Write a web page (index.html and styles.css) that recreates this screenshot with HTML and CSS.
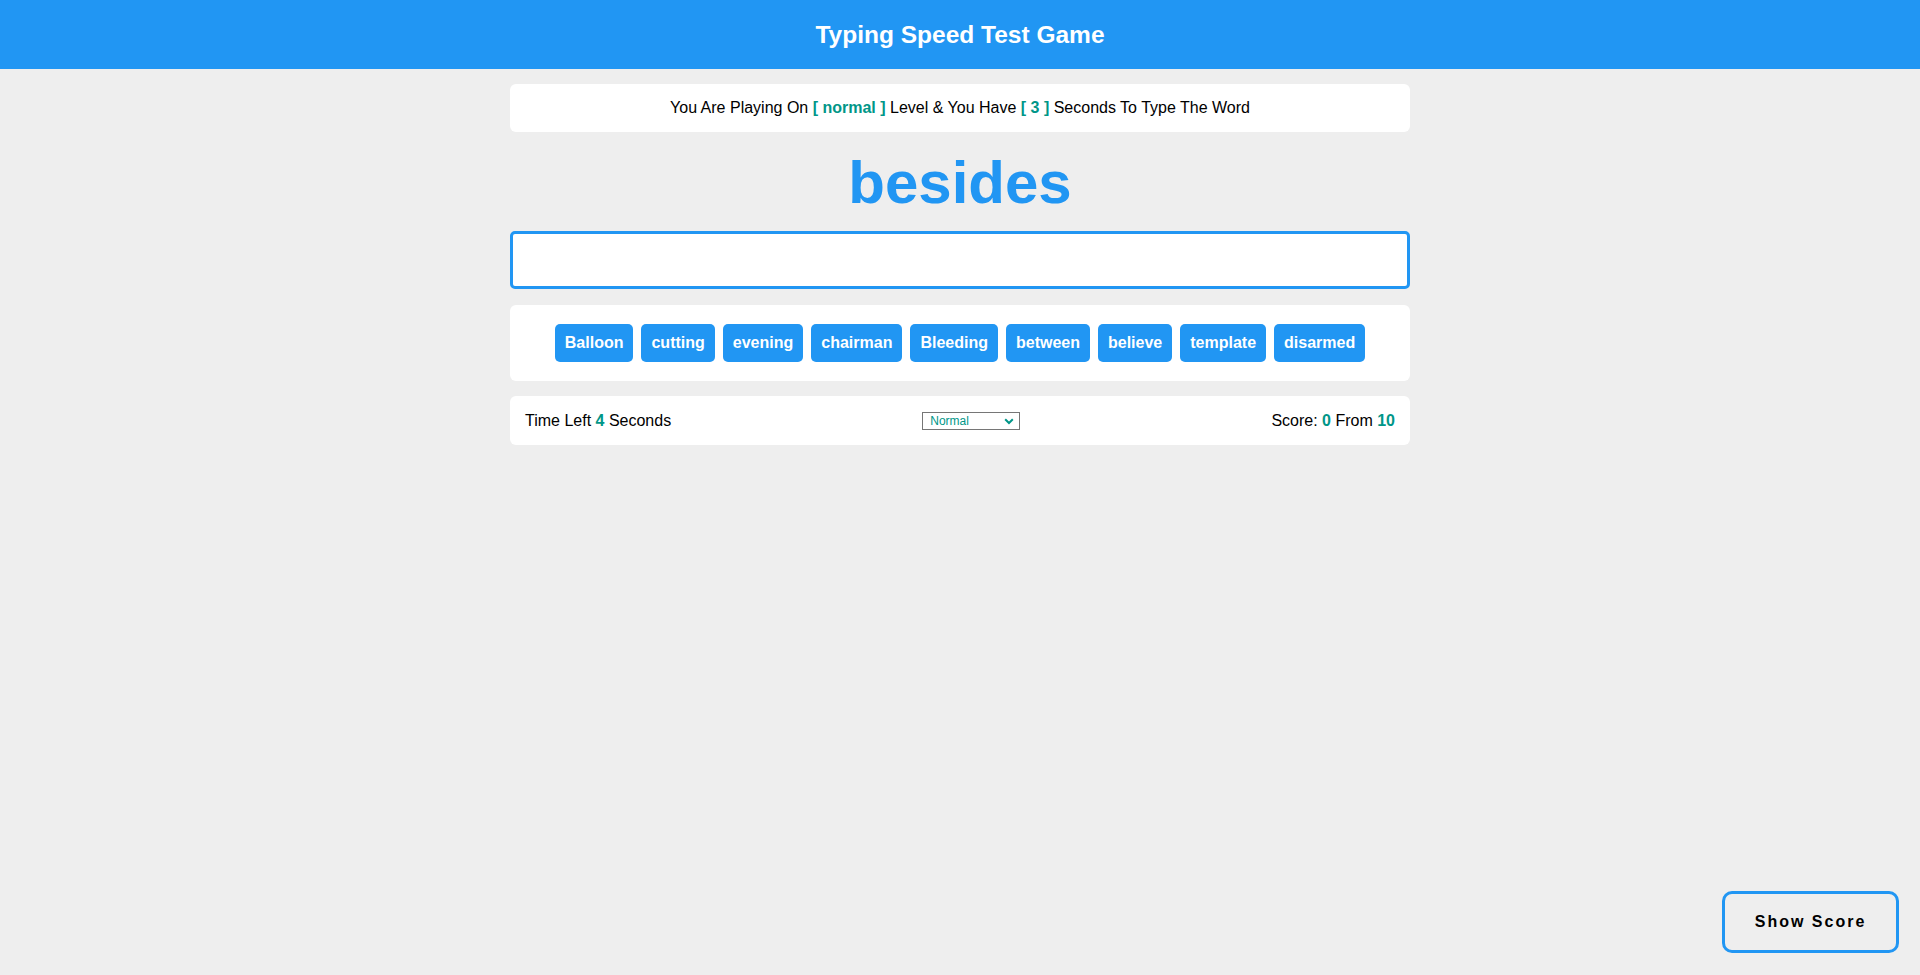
FILE: index.html
```html
<!DOCTYPE html>
<html lang="en">
<head>
<meta charset="UTF-8">
<title>Typing Speed Test Game</title>
<link rel="stylesheet" href="styles.css">
</head>
<body>
<header class="site-header">
  <h1 class="site-title">Typing Speed Test Game</h1>
</header>
<main class="game">
  <div class="message">You Are Playing On <span class="accent">[ normal ]</span> Level &amp; You Have <span class="accent">[ 3 ]</span> Seconds To Type The Word</div>
  <div class="the-word">besides</div>
  <input class="input" type="text" aria-label="Type the word">
  <div class="upcoming-words">
    <span class="word-chip">Balloon</span>
    <span class="word-chip">cutting</span>
    <span class="word-chip">evening</span>
    <span class="word-chip">chairman</span>
    <span class="word-chip">Bleeding</span>
    <span class="word-chip">between</span>
    <span class="word-chip">believe</span>
    <span class="word-chip">template</span>
    <span class="word-chip">disarmed</span>
  </div>
  <div class="control">
    <div class="time">Time Left <span class="accent">4</span> Seconds</div>
    <div class="select-wrap">
      <select class="level-select" aria-label="Level">
        <option>Easy</option>
        <option selected>Normal</option>
        <option>Hard</option>
      </select>
      <svg class="select-arrow" width="10" height="7" viewBox="0 0 10 7"><path d="M1.2 1.3 L5 5 L8.8 1.3" fill="none" stroke="#009688" stroke-width="2"/></svg>
    </div>
    <div class="score">Score: <span class="accent">0</span> From <span class="accent">10</span></div>
  </div>
</main>
<button class="show-score" type="button">Show Score</button>
</body>
</html>
```

FILE: styles.css
```css
* { box-sizing: border-box; }

body {
  margin: 0;
  background: #eeeeee;
  font-family: "Liberation Sans", Arial, sans-serif;
  font-size: 16px;
  color: #000;
}

.site-header {
  background: #2196f3;
  padding: 20px;
  text-align: center;
}

.site-title {
  margin: 0;
  color: #fff;
  font-size: 24.5px;
  line-height: 29px;
  font-weight: bold;
}

.game {
  width: 900px;
  margin: 15px auto 0;
  display: flex;
  flex-direction: column;
}

.message {
  background: #fff;
  border-radius: 6px;
  padding: 15px;
  text-align: center;
  line-height: 18px;
}

.accent {
  color: #009688;
  font-weight: bold;
}

.the-word {
  text-align: center;
  color: #2196f3;
  font-size: 60px;
  font-weight: bold;
  line-height: 69px;
  margin: 16px 0 14px;
}

.input {
  display: block;
  width: 100%;
  height: 58px;
  border: 3px solid #2196f3;
  border-radius: 5px;
  background: #fff;
  font-size: 20px;
  padding: 0 15px;
  outline: none;
}

.upcoming-words {
  margin-top: 16px;
  background: #fff;
  border-radius: 6px;
  padding: 19px 15px;
  display: flex;
  justify-content: center;
  gap: 8px;
}

.word-chip {
  background: #2196f3;
  color: #fff;
  font-weight: bold;
  border-radius: 5px;
  padding: 10px;
  line-height: 18px;
}

.control {
  margin-top: 15px;
  background: #fff;
  border-radius: 6px;
  padding: 15px;
  display: flex;
  justify-content: space-between;
  align-items: center;
  line-height: 19px;
}

.time .accent, .score .accent { font-weight: bold; }

.select-wrap {
  position: relative;
  display: flex;
}

.level-select {
  -webkit-appearance: none;
  appearance: none;
  width: 98px;
  height: 18px;
  border: 1px solid #767676;
  border-radius: 0;
  background: #fff;
  color: #009688;
  font-family: "Liberation Sans", Arial, sans-serif;
  font-size: 12px;
  line-height: 14px;
  padding: 0 0 0 7px;
}

.select-arrow {
  position: absolute;
  right: 6px;
  top: 6px;
  pointer-events: none;
}

.show-score {
  position: fixed;
  right: 21px;
  bottom: 22px;
  width: 177px;
  height: 62px;
  background: #eeeeee;
  border: 3px solid #2196f3;
  border-radius: 10px;
  font-family: "Liberation Sans", Arial, sans-serif;
  font-size: 16px;
  font-weight: bold;
  letter-spacing: 2px;
  color: #000;
  padding: 0;
}
```
